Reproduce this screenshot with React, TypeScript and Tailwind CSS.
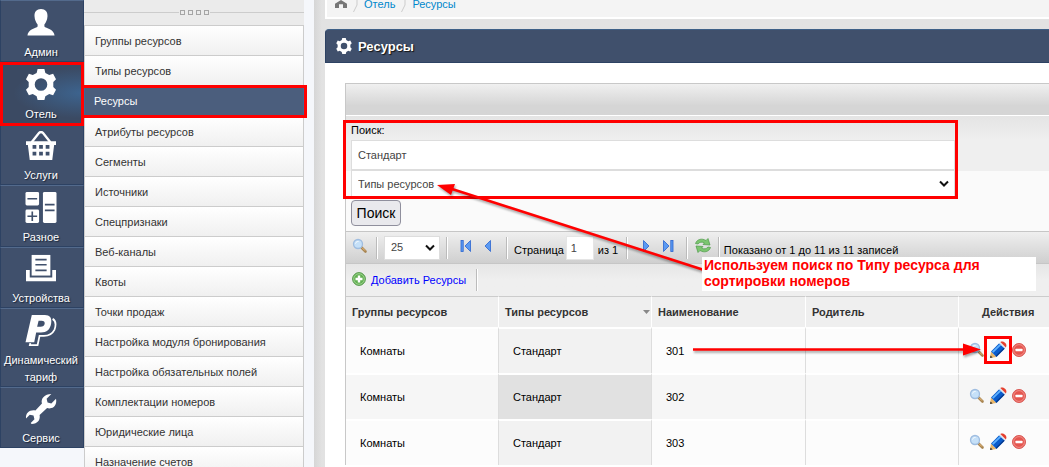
import type { ReactNode } from 'react';

function Gear({ className }: { className: string }) {
  return (
    <svg viewBox="0 0 32 32" className={className} fill="currentColor" aria-hidden="true">
      <path
        fillRule="evenodd"
        d="M12.500 0h7l1 4 4 2.300 4-1.300 3 5.500-2.800 3v5l2.800 3-3 5.500-4-1.300-4 2.300-1 4h-7l-1-4-4-2.300-4 1.300-3-5.500 2.800-3v-5L.5 10.500l3-5.500 4 1.300 4-2.300zM16 9.500a6.500 6.500 0 1 0 0 13a6.500 6.500 0 1 0 0-13z"
      />
    </svg>
  );
}

function Person() {
  return (
    <svg viewBox="0 0 32 32" className="size-8" fill="currentColor" aria-hidden="true">
      <path d="M16 2c4.500 0 7 3 6.700 7.500-.2 4-1.700 6.500-3.200 8.500v2c1.500 2 10 2.500 10.500 9.500H2C2.500 22.500 11 22 12.500 20v-2c-1.500-2-3-4.500-3.200-8.500C9 5 11.500 2 16 2z" />
    </svg>
  );
}

function Basket() {
  return (
    <svg viewBox="0 0 32 32" className="size-8" fill="currentColor" aria-hidden="true">
      <path d="M6 12L14 2q2-2 4 0l8 10" fill="none" stroke="currentColor" strokeWidth="2.500" />
      <path
        fillRule="evenodd"
        d="M0 11h32v4h-2l-2 16H4L2 15H0zM7 15v4h4v-4zM14 15v4h4v-4zM21 15v4h4v-4zM7 22v4h4v-4zM14 22v4h4v-4zM21 22v4h4v-4z"
      />
    </svg>
  );
}

function Calculator() {
  return (
    <svg viewBox="0 0 32 32" className="size-8" fill="currentColor" aria-hidden="true">
      <rect width="14" height="14" rx="1.500" />
      <rect y="18" width="14" height="14" rx="1.500" />
      <rect x="18" width="14" height="32" rx="1.500" />
      <path d="M2 7h10M2 25h10M7 20v10M20 13h10M20 19h10" stroke="#40506c" strokeWidth="1.700" />
    </svg>
  );
}

function Printer() {
  return (
    <svg viewBox="0 0 32 32" className="size-8" fill="currentColor" aria-hidden="true">
      <path d="M0 17h4v8h24v-8h4v12H0z" />
      <path d="M6 1h20v22H6z" />
      <path d="M10 6h12M10 11.500h12M10 17.500h12" stroke="#40506c" strokeWidth="1.700" />
    </svg>
  );
}

function DoubleP() {
  return (
    <svg viewBox="0 0 32 32" className="size-8" fill="currentColor" aria-hidden="true">
      <path d="M6.500 0H20c5 0 7.500 3 6.500 8.500C25.500 15 22 18 16 18h-5l-2 10H0zM13.500 6L12 12h3.500c2.500 0 4-1 4.300-3 .3-2-.8-3-3.300-3z" fillRule="evenodd" />
      <path d="M28 4c3.500 2 3.500 6.500 2 11-2 4-5.500 6.500-11 6.500h-4.500L12.500 31H4.500l.5-2" fill="none" stroke="currentColor" strokeWidth="1.800" />
    </svg>
  );
}

function Wrench() {
  return (
    <svg viewBox="0 0 32 32" className="size-8" fill="currentColor" aria-hidden="true">
      <path d="M27 0l-5 5 1 4 4 1 5-5c1 5-1 9-5 10-2 .6-3 .3-4.500 0L14.500 22.500c1 5-2 9.500-8.500 9.500l-1-1 4-4-1-4-4-1-4 4c-.5-6 4-9.500 10-8.500L17 10c-1.500-5 3-10 10-10z" />
    </svg>
  );
}

function Magnifier() {
  return (
    <svg viewBox="0 0 16 16" className="size-4" aria-hidden="true">
      <path d="M9.500 9.500l4 4" stroke="#a88552" strokeWidth="2.600" strokeLinecap="round" />
      <path d="M10 9.600l3 3" stroke="#eebf7c" strokeWidth="1" />
      <circle cx="6" cy="6" r="4.500" fill="#c5e0f8" stroke="#9fbde0" strokeWidth="1.300" />
      <path d="M3.500 5.500c.5-1.500 1.500-2 3-2" stroke="#fff" fill="none" />
    </svg>
  );
}

function Pencil() {
  return (
    <svg viewBox="0 0 18 18" className="size-[18px]" aria-hidden="true">
      <path d="M1 17l1-6.500L7.500 16z" fill="#e9b668" />
      <path d="M1 17l.5-2.600 2.200 2.200z" fill="#333" />
      <path d="M2 10.500L10.200 2.200 15.800 7.500 7.500 16z" fill="#0b5ccc" />
      <path d="M3.700 11.200L12 3.200" stroke="#5eb1ff" strokeWidth="1.800" />
      <path d="M7 15.200L15.200 7.200" stroke="#083c8e" strokeWidth="1.300" />
      <path d="M10.200 2.200l1.200-1.200 5.500 5.400-1.100 1.100z" fill="#dfe6ee" />
      <path d="M11.400 1C14-.6 19 2.500 16.900 6.400z" fill="#e5402e" />
    </svg>
  );
}

function Remove() {
  return (
    <svg viewBox="0 0 16 16" className="size-4" aria-hidden="true">
      <circle cx="8" cy="8" r="6.500" fill="#e5564f" stroke="#d95a55" />
      <circle cx="8" cy="8" r="5.400" fill="none" stroke="#f49a94" strokeWidth=".8" />
      <rect x="4.500" y="6.700" width="7" height="2.600" rx=".5" fill="#fff" />
    </svg>
  );
}

function Add() {
  return (
    <svg viewBox="0 0 16 16" className="size-4" aria-hidden="true">
      <circle cx="8" cy="7" r="6.400" fill="#62b052" stroke="#5a9a50" />
      <circle cx="8" cy="7" r="5.300" fill="none" stroke="#a9d99b" strokeWidth=".8" />
      <path d="M8 3.500v7M4.500 7h7" stroke="#fff" strokeWidth="2.400" />
    </svg>
  );
}

function Refresh() {
  return (
    <svg viewBox="0 0 18 18" className="size-[18px]" fill="#7cc670" stroke="#4d9a49" strokeWidth=".7" aria-hidden="true">
      <path d="M1.500 6.500C3 2 8 1 12 3.500L14 1.500l2 6.500-7-.5 1.500-1.500C8 4.500 5.500 5 4 7z" />
      <path d="M16.500 10.500c-1.500 4.500-6.500 5.500-10.500 3L4 15.500 2 9l7 .5L7.500 11c2.500 1.500 5 1 6.500-1z" />
    </svg>
  );
}

function PageArrow({ bar, flip }: { bar?: boolean; flip?: boolean }) {
  return (
    <svg viewBox="0 0 12 14" className={flip ? 'h-3.5 w-3 -scale-x-100' : 'h-3.5 w-3'} fill="#5b9af2" stroke="#2a63cf" strokeWidth=".8" aria-hidden="true">
      {bar && <rect x="1" y="1.500" width="2.200" height="11" />}
      <path d={bar ? 'M10.500 1.500v11L5 7z' : 'M8.500 1.500v11L3 7z'} />
    </svg>
  );
}

function Chevron() {
  return (
    <svg viewBox="0 0 10 8" className="pointer-events-none h-2 w-2.5" fill="none" stroke="#111" strokeWidth="2" aria-hidden="true">
      <path d="M1 1.500l4 4 4-4" />
    </svg>
  );
}

const nav: { label: string; icon: ReactNode; size: string; active?: boolean }[] = [
  { label: 'Админ', icon: <Person />, size: 'h-[62px]' },
  { label: 'Отель', icon: <Gear className="size-8" />, size: 'h-[62px]', active: true },
  { label: 'Услуги', icon: <Basket />, size: 'h-[61px]' },
  { label: 'Разное', icon: <Calculator />, size: 'h-[62px]' },
  { label: 'Устройства', icon: <Printer />, size: 'h-[61px]' },
  { label: 'Динамический тариф', icon: <DoubleP />, size: 'h-[79px]' },
  { label: 'Сервис', icon: <Wrench />, size: 'h-[61px]' },
];

const submenu = [
  'Группы ресурсов',
  'Типы ресурсов',
  'Ресурсы',
  'Атрибуты ресурсов',
  'Сегменты',
  'Источники',
  'Спецпризнаки',
  'Веб-каналы',
  'Квоты',
  'Точки продаж',
  'Настройка модуля бронирования',
  'Настройка обязательных полей',
  'Комплектации номеров',
  'Юридические лица',
  'Назначение счетов',
];

function MainNav() {
  return (
    <nav className="w-[84px] shrink-0">
      {nav.map((item) => (
        <a
          key={item.label}
          href="#"
          className={`${item.size} relative flex flex-col items-center border-x border-y border-x-[#2d4263] border-b-[#2d4263] pt-[6px] pr-0.5 text-center text-[11px] leading-[17px] text-white [text-shadow:1px_1px_1px_#1b2537] ${
            item.active
              ? 'border-t-[#3b4a63] bg-[radial-gradient(ellipse_at_right,#3d648f_0%,#3b4a63_60%)]'
              : 'border-t-[#536a8c] bg-[#40506c]'
          }`}
        >
          {item.icon}
          <span className="mt-[6px]">{item.label}</span>
          {item.active && <span className="pointer-events-none absolute -inset-x-px -top-px -bottom-[3px] z-10 border-3 border-[#f00]" />}
        </a>
      ))}
    </nav>
  );
}

function SubNav() {
  return (
    <nav className="w-[220px] shrink-0 bg-[#ebebeb]">
      <div className="flex h-[25px] items-center">
        <span className="h-px flex-1 bg-[#ccc]" />
        <span className="flex gap-[3px] px-px">
          {[0, 1, 2, 3].map((n) => (
            <span key={n} className="size-[5px] border border-[#a5a5a5]" />
          ))}
        </span>
        <span className="h-px flex-1 bg-[#ccc]" />
      </div>
      <ul>
        {submenu.map((label) => (
          <li key={label}>
            {label === 'Ресурсы' ? (
              <a href="#" aria-current="page" className="relative flex h-[31px] items-center border border-[#3f6794] bg-[#4b5e7d] pt-0.5 pl-[9px] text-[11px] text-white">
                {label}
                <span className="pointer-events-none absolute -top-px -right-1 -bottom-[3px] -left-1 z-10 border-3 border-[#f00]" />
              </a>
            ) : (
              <a href="#" className="flex h-[30px] items-center border-x border-t border-[#ccc] bg-linear-to-b from-white to-[#f0f0f0] pt-0.5 pl-2.5 text-[11px] text-[#333]">
                {label}
              </a>
            )}
          </li>
        ))}
      </ul>
    </nav>
  );
}

function Divider() {
  return <span className="h-[22px] w-0.5 border-l border-[#bbb] bg-white" />;
}

function SearchForm() {
  return (
    <form className="h-[115px] bg-[linear-gradient(#e4e4e4,#efefef_24px,#efefef_55px,#fafafa_55px)] pt-[7px] pl-[5px]" onSubmit={(e) => e.preventDefault()}>
      <div className="relative w-[604px]">
        <label htmlFor="query" className="block h-[17px] text-[11px] leading-[15px] text-black">
          Поиск:
        </label>
        <input id="query" defaultValue="Стандарт" className="block h-[30px] w-full border border-[#ddd] bg-white px-1.5 text-[11px] text-[#444] outline-none" />
        <div className="flex items-center">
          <select aria-label="Поле поиска" className="h-7 w-full appearance-none border border-[#ddd] bg-white px-1.5 text-[11px] text-[#444]">
            <option>Типы ресурсов</option>
          </select>
          <span className="-ml-4">
            <Chevron />
          </span>
        </div>
        <span className="pointer-events-none absolute -top-[3px] -right-[3px] -bottom-px -left-2 border-3 border-[#f00]" />
      </div>
      <button className="mt-0.5 h-[26px] w-[50px] rounded border border-[#8f8f9d] bg-[#e9e9ed] text-center text-sm text-black">Поиск</button>
    </form>
  );
}

function Pager() {
  return (
    <div className="flex h-8 items-center gap-1.5 border-t border-[#c6c6c6] bg-linear-to-b from-[#efefef] to-[#cfcfcf] pl-1.5 text-[11px] text-black">
      <button aria-label="Найти" className="mr-0.5 pb-1">
        <Magnifier />
      </button>
      <Divider />
      <span className="flex items-center">
        <select aria-label="Записей на странице" className="h-6 w-[56px] appearance-none border border-[#ddd] bg-white px-1.5 text-[11px] text-[#444]">
          <option>25</option>
        </select>
        <span className="-ml-[15px] w-[15px]">
          <Chevron />
        </span>
      </span>
      <Divider />
      <span className="flex gap-2.5 px-1.5 pb-1">
        <button aria-label="Первая страница"><PageArrow bar /></button>
        <button aria-label="Предыдущая страница"><PageArrow /></button>
      </span>
      <Divider />
      <label htmlFor="page" className="pt-1.5">Страница</label>
      <input id="page" defaultValue="1" className="-ml-1 h-6 w-7 border border-[#e5e5e5] bg-white px-1 text-[11px] text-[#444]" />
      <span className="-ml-0.5 w-[22px] pt-1.5 whitespace-nowrap">из 1</span>
      <Divider />
      <span className="flex gap-2.5 px-1.5 pb-1">
        <button aria-label="Следующая страница"><PageArrow flip /></button>
        <button aria-label="Последняя страница"><PageArrow bar flip /></button>
      </span>
      <Divider />
      <button aria-label="Обновить" className="pb-1"><Refresh /></button>
      <Divider />
      <span className="-ml-0.5 pt-1.5 whitespace-nowrap">Показано от 1 до 11 из 11 записей</span>
    </div>
  );
}

function ResourceTable() {
  return (
    <table className="w-full table-fixed border-separate border-spacing-0 text-left text-[11px]">
      <colgroup>
        <col className="w-[153px]" />
        <col className="w-[153px]" />
        <col className="w-[154px]" />
        <col className="w-[153px]" />
        <col />
      </colgroup>
      <thead>
        <tr className="h-[31px] text-[#333]">
          {['Группы ресурсов', 'Типы ресурсов', 'Наименование', 'Родитель'].map((h, i) => (
            <th key={h} className="border-t border-r border-t-[#ccc] border-r-white bg-[#efefef] pl-1.5 font-bold">
              <span className="flex items-center justify-between pr-px">
                {h}
                {i === 1 && (
                  <svg viewBox="0 0 7 4" className="h-1 w-[7px]" fill="#888" aria-hidden="true">
                    <path d="M0 0h7L3.500 4z" />
                  </svg>
                )}
              </span>
            </th>
          ))}
          <th className="border-t border-[#ccc] bg-[#efefef] pl-[23px] font-bold">Действия</th>
        </tr>
      </thead>
      <tbody className="text-black">
        {['301', '302', '303'].map((room) => (
          <tr key={room} className="group h-[46px] bg-[#fcfcfc] even:bg-[#f6f6f6]">
            <td className="border-t-2 border-r border-t-white border-r-[#ddd] pl-3.5">Комнаты</td>
            <td className="border-t-2 border-r border-t-white border-r-[#ddd] bg-[#f2f2f2] pl-3.5 group-even:bg-[#e1e1e1]">Стандарт</td>
            <td className="border-t-2 border-r border-t-white border-r-[#ddd] pl-3.5">{room}</td>
            <td className="border-t-2 border-r border-t-white border-r-[#ddd]" />
            <td className="border-t-2 border-white pl-2.5">
              <span className="flex items-center gap-1 pb-[3px]">
                <button aria-label="Просмотр"><Magnifier /></button>
                <button aria-label="Изменить" className="relative">
                  <Pencil />
                  {room === '301' && <span className="absolute -inset-[5px] border-3 border-[#f00]" />}
                </button>
                <button aria-label="Удалить"><Remove /></button>
              </span>
            </td>
          </tr>
        ))}
      </tbody>
    </table>
  );
}

function Annotations() {
  return (
    <div className="pointer-events-none absolute inset-0">
      <svg className="absolute top-0 left-0 h-[467px] w-[1049px] [filter:drop-shadow(1px_2px_1px_rgb(0_0_0/0.35))]" aria-hidden="true">
        <path d="M452 189L704 270M693 349.500h272" stroke="#f00" strokeWidth="2.600" fill="none" />
        <path d="M437 185l18-1-4 11zM981 349.500l-18-6v12z" fill="#f00" />
      </svg>
      <p className="absolute top-[257px] left-[702px] w-[334px] bg-white pb-0.5 pl-0.5 text-sm leading-4 font-bold text-[#f00]">
        Используем поиск по Типу ресурса для
        <br />
        сортировки номеров
      </p>
    </div>
  );
}

export default function App() {
  return (
    <div className="relative flex h-screen overflow-hidden bg-[#f5f7fb] font-['Liberation_Sans',Arial,sans-serif]">
      <MainNav />
      <SubNav />
      <main className="ml-2.5 min-w-0 flex-1 bg-[#e2e2e2] bg-linear-to-r from-[#d6d6d6] to-[#e2e2e2] to-[8px] pl-[11px]">
        <div className="flex h-[19px] items-start gap-1.5 border-2 border-t-0 border-r-0 border-white bg-[#f4f4f4] pl-2 text-[11px] leading-[8px] text-[#08c]">
          <a href="#" aria-label="Главная" className="text-[#777]">
            <svg viewBox="0 0 12 11" className="h-2 w-3" fill="currentColor" preserveAspectRatio="none" aria-hidden="true">
              <path d="M6 0l6 5v6H8V6H4v5H0V5z" />
            </svg>
          </a>
          <svg viewBox="0 0 5 12" className="h-3 w-[5px]" stroke="#ccc" fill="none" aria-hidden="true"><path d="M4 0v5L.5 12" /></svg>
          <a href="#">Отель</a>
          <svg viewBox="0 0 5 12" className="h-3 w-[5px]" stroke="#ccc" fill="none" aria-hidden="true"><path d="M4 0v5L.5 12" /></svg>
          <a href="#">Ресурсы</a>
        </div>
        <section className="mt-2.5 min-h-screen rounded-tl bg-white">
          <h1 className="flex h-[34px] items-center gap-1.5 rounded-tl border-y border-l border-t-[#3d5f86] border-b-[#2d4263] border-l-[#2d4263] bg-[#40506c] pl-2.5 text-[13px] font-bold text-white [text-shadow:1px_1px_1px_#111]">
            <Gear className="size-4" />
            <span className="pt-0.5">Ресурсы</span>
          </h1>
          <div className="mt-5 ml-5 border-t border-l border-[#c8c8c8]">
            <div className="h-8 border-b border-white bg-linear-to-b from-[#f0f0f0] to-[#d5d5d5] to-70%" />
            <SearchForm />
            <Pager />
            <div className="flex h-[33px] items-center border-t border-[#c6c6c6] bg-linear-to-b from-[#e6e6e6] to-[#efefef] to-50% pl-[5px] text-[11px]">
              <a href="#" className="mr-2.5 flex items-center gap-1 text-[#00f]">
                <Add />
                Добавить Ресурсы
              </a>
              <Divider />
            </div>
            <ResourceTable />
          </div>
        </section>
      </main>
      <Annotations />
    </div>
  );
}
